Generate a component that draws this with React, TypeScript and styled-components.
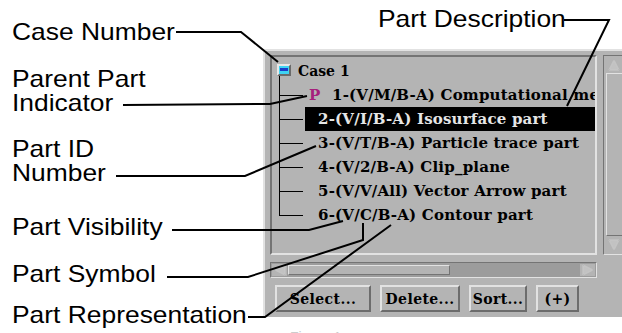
import React from "react";
import styled, { createGlobalStyle } from "styled-components";

const GlobalStyle = createGlobalStyle`
  html, body { margin: 0; padding: 0; background: #ffffff; }
  body { width: 622px; height: 333px; overflow: hidden; }
`;

const GRAY = "#b4b4b4";
const LIGHT = "#e2e2e2";
const DARK = "#747474";

const Figure = styled.div`
  position: relative;
  width: 622px;
  height: 333px;
  overflow: hidden;
  display: grid;
  grid-template-columns: 263px 359px;
  grid-template-rows: 49px 268px 16px;
  background: #ffffff;
`;

const LabelColumn = styled.div`
  grid-column: 1;
  grid-row: 1 / 4;
  display: flex;
  flex-direction: column;
  align-items: flex-start;
  padding-left: 12px;
`;

const Callout = styled.div<{ $gap: number }>`
  margin-top: ${(p) => p.$gap}px;
  font-family: "Liberation Sans", Arial, sans-serif;
  font-size: 24px;
  line-height: 24px;
  color: #000;
  white-space: nowrap;
  transform: scaleX(1.1);
  transform-origin: left center;
`;

const TopArea = styled.div`
  grid-column: 2;
  grid-row: 1;
  padding: 7px 0 0 115px;
`;

const Panel = styled.div`
  grid-column: 2;
  grid-row: 2;
  box-sizing: border-box;
  background: ${GRAY};
  border-top: 2px solid ${LIGHT};
  border-left: 2px solid ${LIGHT};
  padding: 4px 0 0 5px;
  display: grid;
  grid-template-columns: 327px 24px;
  grid-template-rows: 200px 16px 27px;
  column-gap: 6px;
  row-gap: 7px;
`;

const ListBox = styled.div`
  grid-column: 1;
  grid-row: 1;
  box-sizing: border-box;
  border-top: 2px solid ${DARK};
  border-left: 2px solid ${DARK};
  border-bottom: 2px solid ${LIGHT};
  border-right: 2px solid ${LIGHT};
  padding-top: 2px;
  overflow: hidden;
  background: ${GRAY};
  font-family: "DejaVu Serif", "Liberation Serif", serif;
  font-weight: bold;
  font-size: 14px;
`;

const CaseRow = styled.div`
  position: relative;
  height: 24px;
  display: flex;
  align-items: center;
  gap: 7px;
  padding-left: 5px;
  line-height: 24px;
  color: #000;
  &::after {
    content: "";
    position: absolute;
    left: 7px;
    top: 17px;
    bottom: 0;
    width: 1px;
    background: #000;
  }
`;

const CaseIcon = styled.span`
  box-sizing: border-box;
  width: 14px;
  height: 12px;
  margin-top: -3px;
  border-top: 2px solid #e8e8e8;
  border-left: 2px solid #e8e8e8;
  border-bottom: 2px solid #6a6a6a;
  border-right: 2px solid #6a6a6a;
  background: #3fd3f3;
  display: flex;
  align-items: center;
  justify-content: center;
  &::before {
    content: "";
    width: 8px;
    height: 3px;
    background: #1a3cc8;
  }
`;

const TreeRow = styled.div<{ $last?: boolean }>`
  position: relative;
  height: 24px;
  display: flex;
  padding-left: 33px;
  &::before {
    content: "";
    position: absolute;
    left: 7px;
    top: 0;
    width: 1px;
    height: ${(p) => (p.$last ? "13px" : "24px")};
    background: #000;
  }
  &::after {
    content: "";
    position: absolute;
    left: 7px;
    top: 12px;
    width: 24px;
    height: 1px;
    background: #000;
  }
`;

const RowLabel = styled.div<{ $selected?: boolean }>`
  flex: 1;
  min-width: 0;
  padding-left: 13px;
  font-size: 15px;
  letter-spacing: 0.2px;
  line-height: 24px;
  white-space: nowrap;
  overflow: hidden;
  background: ${(p) => (p.$selected ? "#000" : "transparent")};
  color: ${(p) => (p.$selected ? "#e6e6e6" : "#000")};
`;

const ParentMark = styled.span`
  display: inline-block;
  width: 23px;
  margin-left: -9px;
  color: #a6207c;
`;

const VScroll = styled.div`
  grid-column: 2;
  grid-row: 1;
  box-sizing: border-box;
  border-top: 1px solid ${DARK};
  border-left: 1px solid ${DARK};
  border-bottom: 1px solid ${LIGHT};
  background: ${GRAY};
  display: flex;
  flex-direction: column;
  padding: 1px 0 1px 1px;
`;

const HScroll = styled.div`
  grid-column: 1;
  grid-row: 2;
  box-sizing: border-box;
  border-top: 1px solid ${DARK};
  border-left: 1px solid ${DARK};
  border-bottom: 1px solid ${LIGHT};
  border-right: 1px solid ${LIGHT};
  background: #9c9c9c;
  display: flex;
  padding: 1px;
`;

const ArrowBox = styled.div<{ $size: number; $horizontal?: boolean }>`
  flex: none;
  width: ${(p) => (p.$horizontal ? `${p.$size}px` : "18px")};
  height: ${(p) => (p.$horizontal ? "auto" : `${p.$size}px`)};
  background: ${GRAY};
  display: flex;
  align-items: center;
  justify-content: center;
`;

const Thumb = styled.div<{ $length?: number }>`
  box-sizing: border-box;
  flex: ${(p) => (p.$length ? `0 0 ${p.$length}px` : "1")};
  background: ${GRAY};
  border-top: 1px solid ${LIGHT};
  border-left: 1px solid ${LIGHT};
  border-bottom: 1px solid ${DARK};
  border-right: 1px solid ${DARK};
  margin: 1px;
`;

const Trough = styled.div`
  flex: 1;
  background: #9c9c9c;
`;

const ButtonRow = styled.div`
  grid-column: 1 / 3;
  grid-row: 3;
  display: flex;
  gap: 9px;
  padding-left: 5px;
`;

const PanelButton = styled.button<{ $width: number }>`
  box-sizing: border-box;
  width: ${(p) => p.$width}px;
  height: 27px;
  padding: 0;
  margin: 0;
  background: ${GRAY};
  border-top: 2px solid ${LIGHT};
  border-left: 2px solid ${LIGHT};
  border-bottom: 2px solid #6c6c6c;
  border-right: 2px solid #6c6c6c;
  font-family: "DejaVu Serif", "Liberation Serif", serif;
  font-weight: bold;
  font-size: 14px;
  letter-spacing: 0.4px;
  color: #000;
  text-align: center;
`;

const Caption = styled.div`
  grid-column: 2;
  grid-row: 3;
  padding: 12px 0 0 27px;
  font-family: "Liberation Sans", Arial, sans-serif;
  font-size: 14px;
  line-height: 16px;
  color: #cccccc;
`;

const Leaders = styled.svg`
  position: absolute;
  left: 0;
  top: 0;
  pointer-events: none;
`;

const Triangle: React.FC<{ dir: "up" | "down" | "left" | "right" }> = ({ dir }) => {
  const pts: Record<string, string> = {
    up: "6,1 11,11 1,11",
    down: "1,1 11,1 6,11",
    left: "1,6 11,1 11,11",
    right: "1,1 11,6 1,11",
  };
  return (
    <svg width="12" height="12" viewBox="0 0 12 12">
      <polygon points={pts[dir]} fill="#c2c2c2" stroke="#e6e6e6" strokeWidth="1" />
      <polygon points={pts[dir]} fill="none" stroke="#808080" strokeWidth="0.6" opacity="0.6" />
    </svg>
  );
};

const parts = [
  { text: "2-(V/I/B-A) Isosurface part", selected: true },
  { text: "3-(V/T/B-A) Particle trace part" },
  { text: "4-(V/2/B-A) Clip_plane" },
  { text: "5-(V/V/All) Vector Arrow part" },
  { text: "6-(V/C/B-A) Contour part" },
];

export default function App() {
  return (
    <>
      <GlobalStyle />
      <Figure>
        <LabelColumn>
          <Callout $gap={20}>Case Number</Callout>
          <Callout $gap={23}>
            Parent Part
            <br />
            Indicator
          </Callout>
          <Callout $gap={22}>
            Part ID
            <br />
            Number
          </Callout>
          <Callout $gap={30}>Part Visibility</Callout>
          <Callout $gap={23}>Part Symbol</Callout>
          <Callout $gap={17}>Part Representation</Callout>
        </LabelColumn>

        <TopArea>
          <Callout $gap={0}>Part Description</Callout>
        </TopArea>

        <Panel>
          <ListBox>
            <CaseRow>
              <CaseIcon />
              <span>Case 1</span>
            </CaseRow>
            <TreeRow>
              <RowLabel>
                <ParentMark>P</ParentMark>1-(V/M/B-A) Computational mesh part
              </RowLabel>
            </TreeRow>
            {parts.map((p, i) => (
              <TreeRow key={p.text} $last={i === parts.length - 1}>
                <RowLabel $selected={p.selected}>{p.text}</RowLabel>
              </TreeRow>
            ))}
          </ListBox>

          <VScroll>
            <ArrowBox $size={15}>
              <Triangle dir="up" />
            </ArrowBox>
            <Thumb />
            <ArrowBox $size={16}>
              <Triangle dir="down" />
            </ArrowBox>
          </VScroll>

          <HScroll>
            <ArrowBox $size={15} $horizontal>
              <Triangle dir="left" />
            </ArrowBox>
            <Thumb $length={162} />
            <Trough />
            <ArrowBox $size={15} $horizontal>
              <Triangle dir="right" />
            </ArrowBox>
          </HScroll>

          <ButtonRow>
            <PanelButton $width={96}>Select...</PanelButton>
            <PanelButton $width={80}>Delete...</PanelButton>
            <PanelButton $width={58}>Sort...</PanelButton>
            <PanelButton $width={43}>(+)</PanelButton>
          </ButtonRow>
        </Panel>

        <Caption>Figure 1</Caption>

        <Leaders width="622" height="333" viewBox="0 0 622 333">
          <g fill="none" stroke="#000" strokeWidth="2" strokeLinejoin="miter">
            <path d="M176 32 H241 L278 62" />
            <path d="M123 105 L270 104 L307 96" />
            <path d="M116 176 H245 L316 146" />
            <path d="M172 230 H309 L343 221" />
            <path d="M167 277 H248 L363 240 V223" />
            <path d="M248 317 H265 L391 225" />
            <path d="M564 20 H609 L567 106" />
          </g>
        </Leaders>
      </Figure>
    </>
  );
}
